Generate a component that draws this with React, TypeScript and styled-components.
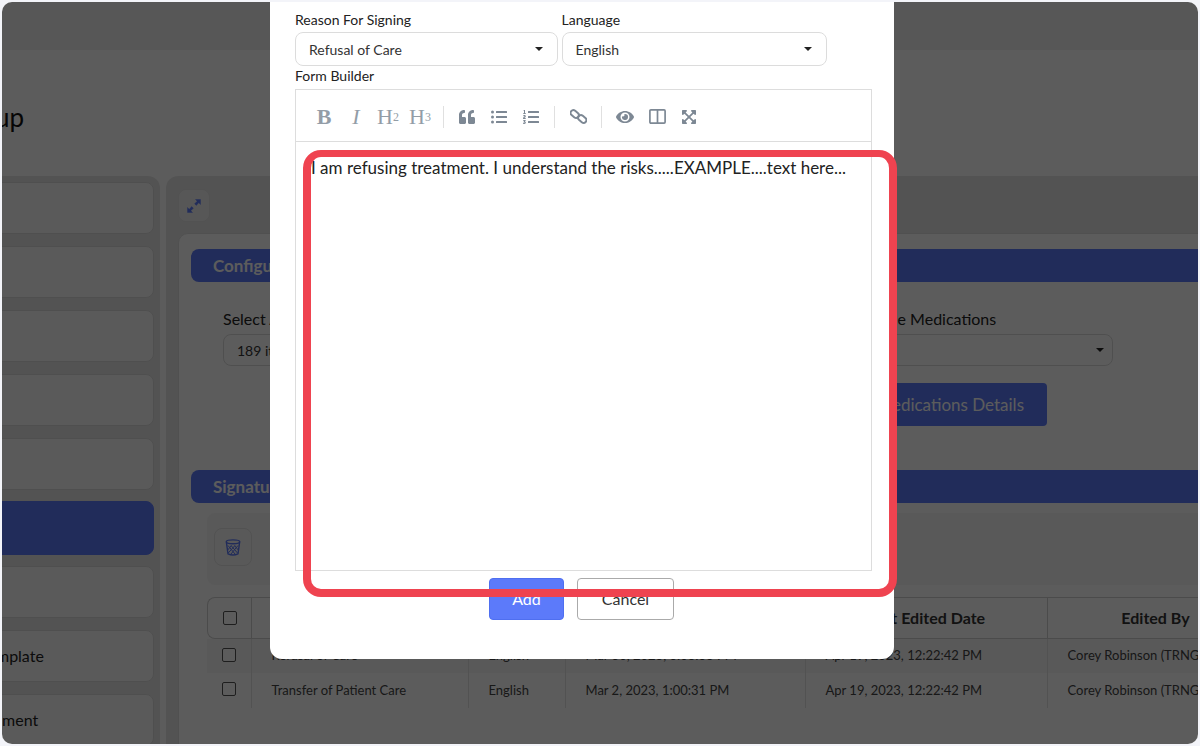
import React from "react";
import styled, { createGlobalStyle } from "styled-components";
import { FaEye, FaExpandArrowsAlt, FaListOl, FaListUl, FaQuoteLeft } from "react-icons/fa";

const primary = "#5c7afa";

const GlobalStyle = createGlobalStyle`
  html, body {
    margin: 0;
    padding: 0;
    background: #f3f4f9;
  }
  body {
    font-family: Lato, "Liberation Sans", sans-serif;
    color: #222;
  }
`;

const Frame = styled.div`
  position: relative;
  margin: 2px;
  width: 1196px;
  height: 742px;
  overflow: hidden;
  border-radius: 10px;
  background: #fff;
`;

const TopBar = styled.div`
  height: 48px;
  background: #f0f0f0;
`;

const TitleRow = styled.div`
  height: 126px;
  display: flex;
  align-items: center;
  justify-content: flex-end;
  width: 22px;
  white-space: nowrap;
`;

const Title = styled.h1`
  margin: 8px 0 0;
  font-size: 26px;
  font-weight: 400;
  color: #111;
`;

const Columns = styled.div`
  display: flex;
  gap: 6px;
  align-items: flex-start;
  margin-left: -85px;
`;

const Sidebar = styled.div`
  flex: 0 0 243px;
  box-sizing: border-box;
  height: 600px;
  padding: 6px 6px 0 0;
  background: #e7e7e7;
  border-radius: 0 12px 0 0;
  display: flex;
  flex-direction: column;
  gap: 12px;
`;

const SideItem = styled.div<{ $active?: boolean }>`
  flex: 0 0 ${(p) => (p.$active ? 54 : 52)}px;
  margin: ${(p) => (p.$active ? "-1px 0" : "0")};
  box-sizing: border-box;
  display: flex;
  align-items: center;
  padding: 0 0 2px 22px;
  border-radius: 8px;
  font-size: 16px;
  color: #222;
  background: ${(p) => (p.$active ? primary : "#fafafa")};
  border: 1px solid ${(p) => (p.$active ? primary : "#dcdcdc")};
`;

const MainPanel = styled.div`
  flex: 0 0 1100px;
  box-sizing: border-box;
  height: 600px;
  padding: 13px 12px 0;
  background: #e7e7e7;
  border-radius: 12px 0 0 0;
`;

const ExpandButton = styled.div`
  width: 32px;
  height: 33px;
  display: flex;
  align-items: center;
  justify-content: center;
  border-radius: 8px;
  background: #f2f2f2;
  border: 1px solid #e2e2e2;
  box-sizing: border-box;
`;

const Card = styled.div`
  margin-top: 11px;
  height: 560px;
  box-sizing: border-box;
  padding: 15px 0 0 12px;
  background: #fff;
  border: 1px solid #dedede;
  border-radius: 10px 0 0 0;
`;

const SectionBar = styled.div`
  height: 33px;
  display: flex;
  align-items: center;
  padding-left: 22px;
  background: ${primary};
  border-radius: 8px 0 0 8px;
  color: #fff;
  font-size: 17px;
  font-weight: 700;
`;

const FormGrid = styled.div`
  margin: 30px 0 0 32px;
  display: grid;
  grid-template-columns: 620px 270px;
  grid-template-rows: 54px 43px;
  row-gap: 17px;
`;

const Field = styled.div`
  display: flex;
  flex-direction: column;
  gap: 8px;
`;

const FieldLabel = styled.label`
  font-size: 16px;
  line-height: 14px;
  color: #222;
  white-space: nowrap;
`;

const Select = styled.div<{ $height?: number; $caretInset?: number }>`
  position: relative;
  box-sizing: border-box;
  height: ${(p) => p.$height ?? 32}px;
  display: flex;
  align-items: center;
  padding-left: 13px;
  border: 1px solid #dcdcdc;
  border-radius: 8px;
  background: #fff;
  font-size: 14px;
  color: #333;

  &::after {
    content: "";
    position: absolute;
    right: ${(p) => p.$caretInset ?? 8}px;
    top: 50%;
    margin-top: -2px;
    border-left: 4px solid transparent;
    border-right: 4px solid transparent;
    border-top: 4px solid #222;
  }
`;

const DetailsButton = styled.div`
  grid-column: 2;
  justify-self: start;
  width: 204px;
  height: 43px;
  box-sizing: border-box;
  display: flex;
  align-items: center;
  justify-content: flex-end;
  padding-right: 23px;
  background: ${primary};
  border-radius: 4px;
  color: #fff;
  font-size: 17px;
  white-space: nowrap;
`;

const SignatureBar = styled(SectionBar)`
  margin-top: 44px;
`;

const ActionStrip = styled.div`
  margin: 10px 0 0 16px;
  height: 72px;
  box-sizing: border-box;
  display: flex;
  align-items: center;
  padding: 0 0 4px 7px;
  background: #f7f7f7;
  border-radius: 8px 0 0 8px;
`;

const TrashButton = styled.div`
  width: 38px;
  height: 38px;
  box-sizing: border-box;
  display: flex;
  align-items: center;
  justify-content: center;
  border: 1px solid #e2e2e2;
  border-radius: 8px;
`;

const Table = styled.div`
  margin: 12px 0 0 16px;
  display: grid;
  grid-template-columns: 44px 217px 97px 240px 242px 216px;
  grid-template-rows: 42px 34px 35px;
`;

const HeadRow = styled.div`
  grid-column: 1 / -1;
  display: grid;
  grid-template-columns: subgrid;
  border: 1px solid #d0d0d0;
  border-right: 0;
  border-radius: 8px 0 0 8px;
  box-sizing: border-box;
`;

const HeadCell = styled.div`
  display: flex;
  align-items: center;
  justify-content: center;
  padding-bottom: 2px;
  font-size: 16px;
  font-weight: 700;
  color: #333;
  border-left: 1px solid #d0d0d0;
  white-space: nowrap;

  &:first-child {
    border-left: 0;
    padding-bottom: 0;
  }
`;

const BodyRow = styled.div<{ $striped?: boolean }>`
  grid-column: 1 / -1;
  display: grid;
  grid-template-columns: subgrid;
  background: ${(p) => (p.$striped ? "#f6f6f6" : "transparent")};
`;

const BodyCell = styled.div`
  display: flex;
  align-items: center;
  padding: 0 0 2px 19.5px;
  font-size: 13px;
  color: #444;
  border-left: 1px solid #e2e2e2;
  white-space: nowrap;

  &:first-child {
    border-left: 0;
    padding: 0 0 3px 15px;
  }
`;

const Checkbox = styled.span`
  display: block;
  width: 14px;
  height: 14px;
  box-sizing: border-box;
  border: 1.5px solid #555;
  border-radius: 2px;
  background: #fff;
`;

const Backdrop = styled.div`
  position: absolute;
  inset: 0;
  background: rgba(0, 0, 0, 0.64);
`;

const Dialog = styled.div`
  margin-left: 268px;
  width: 624px;
  height: 657px;
  box-sizing: border-box;
  padding: 10px 22px 0 25px;
  background: #fff;
  border-radius: 0 0 12px 12px;
  display: flex;
  flex-direction: column;
`;

const SelectRow = styled.div`
  display: grid;
  grid-template-columns: 263px 265px;
  column-gap: 3.5px;
`;

const DialogField = styled.div`
  display: flex;
  flex-direction: column;
  gap: 4px;
`;

const DialogLabel = styled.label`
  font-size: 14px;
  line-height: 16px;
  color: #222;
`;

const BuilderLabel = styled(DialogLabel)`
  margin-top: 2px;
  margin-bottom: 5px;
`;

const Editor = styled.div`
  width: 577px;
  height: 482px;
  box-sizing: border-box;
  border: 1px solid #ddd;
  display: flex;
  flex-direction: column;
`;

const Toolbar = styled.div`
  flex: 0 0 52px;
  box-sizing: border-box;
  display: flex;
  align-items: center;
  padding: 2px 0 0 12px;
  border-bottom: 1px solid #ddd;
`;

const ToolButton = styled.span`
  flex: 0 0 32px;
  height: 30px;
  display: flex;
  align-items: center;
  justify-content: center;
  font-size: 16px;
  color: #7d8894;
`;

const TextTool = styled(ToolButton)`
  font-family: "Liberation Serif", serif;
  font-size: 22px;
  color: #939da7;

  sub {
    font-size: 12px;
    line-height: 0;
    vertical-align: -3px;
  }
`;

const ToolDivider = styled.span<{ $width?: number }>`
  flex: 0 0 ${(p) => p.$width ?? 15}px;
  height: 22px;
  display: flex;
  justify-content: center;

  &::before {
    content: "";
    width: 1px;
    background: #e0e0e0;
  }
`;

const EditorBody = styled.div`
  flex: 1;
  padding: 14px 15px 0;
  font-size: 17px;
  line-height: 24px;
  color: #222;
`;

const DialogActions = styled.div`
  margin-top: 7px;
  padding-left: 194px;
  display: flex;
  gap: 13px;
`;

const ActionButton = styled.button<{ $primary?: boolean }>`
  height: 42px;
  box-sizing: border-box;
  width: ${(p) => (p.$primary ? 75 : 97)}px;
  padding: 0 0 2px;
  border-radius: 4px;
  font-family: inherit;
  font-size: 16px;
  color: ${(p) => (p.$primary ? "#fff" : "#333")};
  background: ${(p) => (p.$primary ? primary : "#fff")};
  border: ${(p) => (p.$primary ? `1px solid #4f6ff0` : "1.5px solid #aaa")};
`;

const Annotation = styled.div`
  position: absolute;
  left: 301px;
  top: 148px;
  width: 594px;
  height: 447px;
  box-sizing: border-box;
  border: 8px solid #ef4350;
  border-top-width: 7px;
  border-radius: 18px;
  pointer-events: none;
`;

const ExpandIcon = () => (
  <svg width="16" height="16" viewBox="0 0 16 16" fill={primary} stroke={primary}>
    <path d="M9.5 1.5h5v5l-1.7-1.7-2.6 2.6-1.6-1.6 2.6-2.6z" strokeWidth="0.4" />
    <path d="M1.5 14.5v-5l1.7 1.7 2.6-2.6 1.6 1.6-2.6 2.6 1.7 1.7z" strokeWidth="0.4" />
  </svg>
);

const LinkIcon = () => (
  <svg width="17" height="17" viewBox="0 0 17 17" fill="none" stroke="currentColor" strokeWidth="2">
    <rect x="0.2" y="3.2" width="9" height="5.6" rx="2.8" transform="rotate(40 4.7 6)" />
    <rect x="7.8" y="8.2" width="9" height="5.6" rx="2.8" transform="rotate(40 12.3 11)" />
  </svg>
);

const ColumnsIcon = () => (
  <svg width="17" height="15" viewBox="0 0 17 15" fill="none" stroke="currentColor" strokeWidth="1.7">
    <rect x="0.9" y="0.9" width="15.2" height="13.2" rx="1" />
    <path d="M8.5 1v13" />
  </svg>
);

const TrashIcon = () => (
  <svg width="16" height="17" viewBox="0 0 16 17" fill="none" stroke={primary}>
    <ellipse cx="8" cy="2.8" rx="6.8" ry="1.9" strokeWidth="1.4" />
    <path d="M1.4 3.4 L3 14.8 Q8 17.2 13 14.8 L14.6 3.4" strokeWidth="1.4" />
    <path d="M3 6.5l7 8.5M6 6.5l6.5 7.5M9.5 6.5l3.8 4.5M13 6.5l-7 8.5M10 6.5l-6.8 7.5M6.5 6.5l-3.8 4.5" strokeWidth="1" />
  </svg>
);

function App() {
  return (
    <Frame>
      <GlobalStyle />
      <TopBar />
      <TitleRow>
        <Title>Signature Form Setup</Title>
      </TitleRow>
      <Columns>
        <Sidebar>
          <SideItem />
          <SideItem />
          <SideItem />
          <SideItem />
          <SideItem />
          <SideItem $active />
          <SideItem />
          <SideItem>Form Template</SideItem>
          <SideItem>Reassessment</SideItem>
        </Sidebar>
        <MainPanel>
          <ExpandButton>
            <ExpandIcon />
          </ExpandButton>
          <Card>
            <SectionBar>Configuration</SectionBar>
            <FormGrid>
              <Field>
                <FieldLabel>Select Agencies</FieldLabel>
                <Select>189 items selected</Select>
              </Field>
              <Field>
                <FieldLabel>Available Medications</FieldLabel>
                <Select />
              </Field>
              <DetailsButton>Medications Details</DetailsButton>
            </FormGrid>
            <SignatureBar>Signature Forms</SignatureBar>
            <ActionStrip>
              <TrashButton>
                <TrashIcon />
              </TrashButton>
            </ActionStrip>
            <Table>
              <HeadRow>
                <HeadCell>
                  <Checkbox />
                </HeadCell>
                <HeadCell>Reason For Signing</HeadCell>
                <HeadCell>Language</HeadCell>
                <HeadCell>Created Date</HeadCell>
                <HeadCell>Last Edited Date</HeadCell>
                <HeadCell>Edited By</HeadCell>
              </HeadRow>
              <BodyRow $striped>
                <BodyCell>
                  <Checkbox />
                </BodyCell>
                <BodyCell>Refusal of Care</BodyCell>
                <BodyCell>English</BodyCell>
                <BodyCell>Mar 30, 2023, 3:03:33 PM</BodyCell>
                <BodyCell>Apr 19, 2023, 12:22:42 PM</BodyCell>
                <BodyCell>Corey Robinson (TRNG)</BodyCell>
              </BodyRow>
              <BodyRow>
                <BodyCell>
                  <Checkbox />
                </BodyCell>
                <BodyCell>Transfer of Patient Care</BodyCell>
                <BodyCell>English</BodyCell>
                <BodyCell>Mar 2, 2023, 1:00:31 PM</BodyCell>
                <BodyCell>Apr 19, 2023, 12:22:42 PM</BodyCell>
                <BodyCell>Corey Robinson (TRNG)</BodyCell>
              </BodyRow>
            </Table>
          </Card>
        </MainPanel>
      </Columns>
      <Backdrop>
        <Dialog>
          <SelectRow>
            <DialogField>
              <DialogLabel>Reason For Signing</DialogLabel>
              <Select $height={34} $caretInset={14}>Refusal of Care</Select>
            </DialogField>
            <DialogField>
              <DialogLabel>Language</DialogLabel>
              <Select $height={34} $caretInset={14}>English</Select>
            </DialogField>
          </SelectRow>
          <BuilderLabel>Form Builder</BuilderLabel>
          <Editor>
            <Toolbar>
              <TextTool><b>B</b></TextTool>
              <TextTool><i>I</i></TextTool>
              <TextTool>H<sub>2</sub></TextTool>
              <TextTool>H<sub>3</sub></TextTool>
              <ToolDivider />
              <ToolButton><FaQuoteLeft /></ToolButton>
              <ToolButton><FaListUl /></ToolButton>
              <ToolButton><FaListOl /></ToolButton>
              <ToolDivider />
              <ToolButton><LinkIcon /></ToolButton>
              <ToolDivider />
              <ToolButton><FaEye size={18} /></ToolButton>
              <ToolButton><ColumnsIcon /></ToolButton>
              <ToolButton><FaExpandArrowsAlt /></ToolButton>
            </Toolbar>
            <EditorBody>I am refusing treatment. I understand the risks.....EXAMPLE....text here...</EditorBody>
          </Editor>
          <DialogActions>
            <ActionButton $primary>Add</ActionButton>
            <ActionButton>Cancel</ActionButton>
          </DialogActions>
        </Dialog>
      </Backdrop>
      <Annotation />
    </Frame>
  );
}

export default App;
